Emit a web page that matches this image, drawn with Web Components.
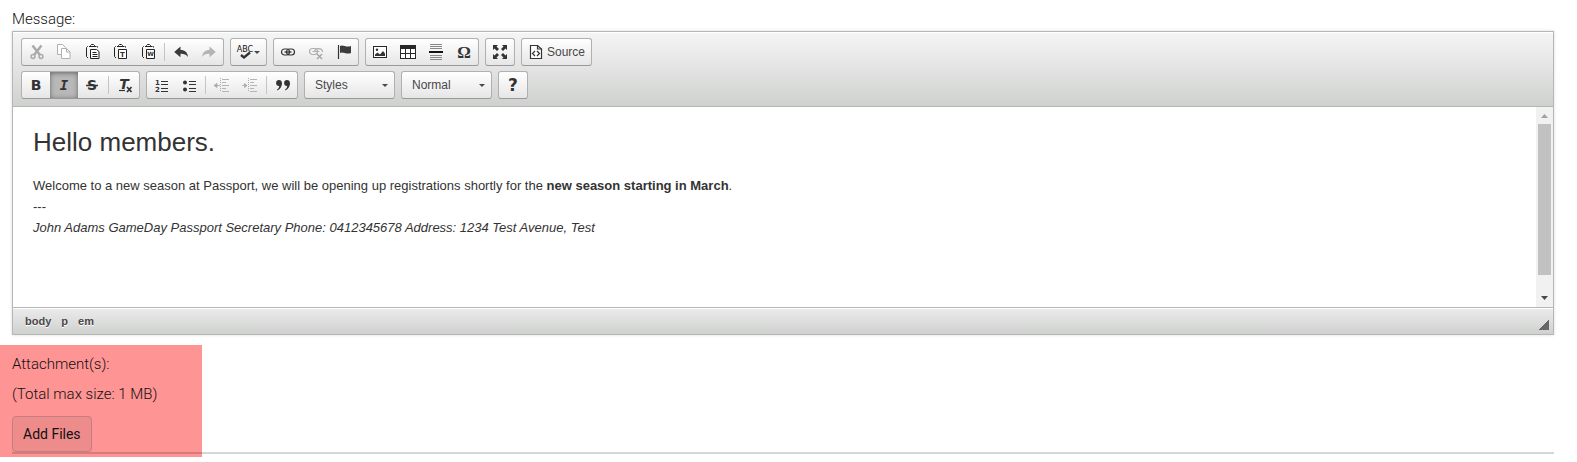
<!DOCTYPE html>
<html lang="en">
<head>
<meta charset="utf-8">
<title>Message</title>
<style>
  body { margin: 0; background: #fff; color: #111; font-family: Roboto, "Liberation Sans", sans-serif; font-size: 15px; }
</style>
</head>
<body>
<message-form></message-form>

<script>
const CLIPBOARD = `<g fill="none" stroke="#222"><path d="M4 2.500h-.5l-1 1v9l1.500 1.500M12.500 2.500h1v1"/><path d="M5 2.500h7M6.500 2V1.500L7.500.5h2l1 1V2"/></g>`;
const ICONS = {
  cut: `<g fill="none" stroke="#a9a9a9"><path d="M4.500 1.500 12 11M13.500 1.500 6 11" stroke-width="2.400"/><circle cx="5" cy="12.500" r="1.900" stroke-width="1.500"/><circle cx="13" cy="12.500" r="1.900" stroke-width="1.500"/></g>`,
  copy: `<g fill="#fff" stroke="#b0b0b0"><path d="M1.500.5h5l3 3v7h-8z"/><path d="M5.500 4.500h5l3.500 3.500v6.500H5.500z"/><path d="M10.500 4.500V8H14" fill="none"/></g>`,
  paste: `${CLIPBOARD}<g fill="none" stroke="#222"><path d="M6.500 5.500h6l2.500 2v7H6.500z" fill="#fff"/><path d="M8.500 8.500h4M8.500 10.500h5M8.500 12.500h5"/></g>`,
  pasteText: `${CLIPBOARD}<path d="M6.500 5.500h8v9h-8z" fill="#fff" stroke="#222"/><text x="10.500" y="13" font-size="7" font-weight="700" text-anchor="middle">T</text>`,
  pasteWord: `${CLIPBOARD}<path d="M6.500 5.500h8v9h-8z" fill="#fff" stroke="#222"/><text x="10.500" y="12" font-size="6" font-weight="700" text-anchor="middle">W</text>`,
  undo: `<path d="M1.200 8 7.500 2.500V6c4.500 0 7 2.500 7.500 7-1.800-2.500-4-3.300-7.500-3.200v3.500z" fill="#3a3a3a"/>`,
  redo: `<path d="M14.800 8 8.500 2.500V6C4 6 1.500 8.500 1 13c1.800-2.500 4-3.300 7.500-3.200v3.500z" fill="#b4b4b4"/>`,
  spell: `<text x="8" y="8" font-size="8" text-anchor="middle" fill="#111">ABC</text><path d="M4 11 7 13.500 13 8.500" fill="none" stroke="#333" stroke-width="2.400"/>`,
  link: `<g fill="none" stroke="#333" stroke-width="1.200"><rect x="1.500" y="5" width="8" height="6" rx="3"/><rect x="6.500" y="5" width="8" height="6" rx="3"/></g><path d="M4.500 8h7" stroke="#333" stroke-width="1.300"/>`,
  unlink: `<g fill="none" stroke="#b0b0b0" stroke-width="1.200"><rect x="1.500" y="4.500" width="8" height="6" rx="3"/><path d="M6.500 7.500c0-4 8-4 8 .5M4.500 7.500h7"/></g><path d="m9 10 5 5m0-5-5 5" stroke="#aaa" stroke-width="1.600"/>`,
  anchor: `<path d="M2.500 1v14" stroke="#333" stroke-width="1.200"/><path d="M4 2c3-2 6 2 11 0v7c-5 2-8-2-11 0z" fill="#3c3c3c"/>`,
  image: `<rect x="1" y="2" width="14" height="12" fill="#282828"/><path d="M2 3h12v10H2z" fill="#fff"/><circle cx="5" cy="5.700" r="1.200" fill="#333"/><path d="M3 12V10.500l2.500-2 2.500 2 3-3.500 2 2.500V12z" fill="#333"/>`,
  table: `<path d="M0 1h16v14H0z" fill="#282828"/><path d="M1 5h4v4H1zm5 0h4v4H6zm5 0h4v4h-4zM1 10h4v4H1zm5 0h4v4H6zm5 0h4v4h-4z" fill="#fff"/>`,
  rule: `<path d="M2 .5h12M2 2.500h12M2 4.500h12M2 11.500h12M2 13.500h12M2 15.500h12" stroke="#888"/><path d="M1 8h14" stroke="#111" stroke-width="2"/>`,
  omega: `<text x="8" y="14" font-size="17" font-weight="700" text-anchor="middle" font-family="Liberation Serif">Ω</text>`,
  maximize: `<g fill="#333"><path d="M1 1h5L4.500 2.500 7 5 5 7 2.500 4.500 1 6zM15 1v5l-1.500-1.500L11 7 9 5l2.500-2.500L10 1zM1 15v-5l1.500 1.500L5 9l2 2-2.500 2.500L6 15zM15 15h-5l1.500-1.500L9 11l2-2 2.500 2.500L15 10z"/></g>`,
  source: `<g fill="none" stroke="#333" stroke-width="1.200"><path d="M2.500 1.500h7l4 3.500v9.500h-11z" fill="#fff"/><path d="M9.500 1.500V5h4"/><path d="M7 7 4.500 9.500 7 12M9 7l2.500 2.500L9 12"/></g>`,
  bold: `<text x="8" y="13" font-size="14" font-weight="700" text-anchor="middle">B</text>`,
  italic: `<text x="8" y="13" font-size="14" font-weight="700" font-style="italic" text-anchor="middle" font-family="DejaVu Sans Mono">I</text>`,
  strike: `<text x="8" y="13" font-size="14" font-weight="700" text-anchor="middle">S</text><path d="M2 8.500h12" stroke="#333" stroke-width="1.500"/>`,
  clear: `<text x="7" y="12" font-size="14" font-weight="700" font-style="italic" text-anchor="middle">T</text><path d="M2 13.500h6" stroke="#333" stroke-width="1.200"/><path d="m10 10 4.500 5m0-5L10 15" stroke="#333" stroke-width="1.700"/>`,
  numbered: `<path d="M8 4.500h7M8 7.500h7M8 11.500h7M8 14.500h7" stroke="#333"/><text x="4.500" y="8" font-size="7" font-weight="700" text-anchor="middle">1</text><text x="4.500" y="15" font-size="7" font-weight="700" text-anchor="middle">2</text>`,
  bulleted: `<circle cx="4" cy="5.500" r="2" fill="#333"/><circle cx="4" cy="12.500" r="2" fill="#333"/><path d="M8 4.500h7M8 7.500h7M8 11.500h7M8 14.500h7" stroke="#333"/>`,
  outdent: `<path d="M6.500 1v14" stroke="#aaa" stroke-dasharray="1 1"/><path d="M8 2.500h7M8 5.500h4M8 8.500h7M8 11.500h4M8 14.500h7" stroke="#b4b4b4"/><path d="M0 8.500l3-2v4zM3 8.500h3" fill="#aaa" stroke="#aaa" stroke-width=".8"/>`,
  indent: `<path d="M6.500 1v14" stroke="#aaa" stroke-dasharray="1 1"/><path d="M8 2.500h7M8 5.500h4M8 8.500h7M8 11.500h4M8 14.500h7" stroke="#b4b4b4"/><path d="M5 8.500 2.500 6.500v4zM0 8.500h3" fill="#aaa" stroke="#aaa" stroke-width=".8"/>`,
  quote: `<g fill="#333"><circle cx="4" cy="6" r="2.900"/><path d="M6.900 5.500C7 9 5.800 12 2.500 13.500L2 12.500C3.800 11.500 4.300 10 4.200 8z"/><circle cx="12" cy="6" r="2.900"/><path d="M14.900 5.500c.1 3.500-1.100 6.500-4.400 8l-.5-1c1.800-1 2.300-2.500 2.200-4.500z"/></g>`,
  help: `<text x="8" y="14" font-size="17" font-weight="700" text-anchor="middle">?</text>`
};

function define(name, html, ready) {
  const template = document.createElement("template");
  template.innerHTML = html;
  customElements.define(name, class extends HTMLElement {
    connectedCallback() {
      if (this.shadowRoot) return;
      this.attachShadow({ mode: "open" }).append(template.content.cloneNode(true));
      if (ready) ready(this, this.shadowRoot);
    }
  });
}

define("tool-group", `
  <style>
    :host { display: flex; align-items: center; height: 26px; border: 1px solid #b0b0b0; border-bottom-color: #999; border-radius: 3px; background: linear-gradient(#fff, #e6e6e6); }
  </style><slot></slot>`);

define("tool-separator", `
  <style>:host { display: block; width: 1px; height: 18px; margin: 0 2px; background: #c4c4c4; }</style>`);

define("tool-button", `
  <style>
    :host { display: block; height: 26px; }
    button { display: flex; align-items: center; gap: 3px; height: 26px; padding: 0 6px; margin: 0; border: 0; background: none; color: #484848; font: 12px "Liberation Sans", sans-serif; }
    :host([pressed]) button { background: #b8b8b8; box-shadow: inset 0 1px 5px rgba(0,0,0,.45); }
    svg { display: block; width: 16px; height: 16px; flex: none; overflow: visible; font-family: "DejaVu Sans", sans-serif; fill: #333; }
    i { display: none; border: solid transparent; border-width: 3px 3px 0; border-top-color: #484848; }
    :host([menu]) button { gap: 1px; }
    :host([menu]) i { display: block; }
  </style>
  <button type="button"><svg viewBox="0 0 16 16" aria-hidden="true"></svg><slot></slot><i></i></button>`,
  (host, root) => {
    const button = root.querySelector("button");
    root.querySelector("svg").innerHTML = ICONS[host.getAttribute("icon")];
    button.setAttribute("aria-label", host.getAttribute("label"));
    if (host.hasAttribute("pressed")) button.setAttribute("aria-pressed", "true");
    button.disabled = host.hasAttribute("disabled");
  });

define("tool-combo", `
  <style>
    :host { display: grid; align-items: center; }
    select { grid-area: 1 / 1; appearance: none; width: 89px; height: 26px; padding: 0 10px; margin: 0; border: 0; background: none; color: #484848; font: 12px "Liberation Sans", sans-serif; }
    i { grid-area: 1 / 1; justify-self: end; margin-right: 6px; border: solid transparent; border-width: 3px 3px 0; border-top-color: #484848; pointer-events: none; }
  </style>
  <select><option></option></select><i></i>`,
  (host, root) => {
    root.querySelector("option").textContent = host.getAttribute("value");
    root.querySelector("select").setAttribute("aria-label", host.getAttribute("label"));
  });

define("scroll-strip", `
  <style>
    :host { display: flex; flex-direction: column; align-items: center; width: 17px; background: #f1f1f1; }
    svg { width: 17px; height: 17px; flex: none; }
    .track { flex: 1; display: flex; width: 13px; }
    .thumb { width: 13px; height: 91%; background: #c1c1c1; }
  </style>
  <svg viewBox="0 0 17 17"><path d="M5 11h7L8.500 7z" fill="#a0a0a0"/></svg>
  <div class="track"><div class="thumb"></div></div>
  <svg viewBox="0 0 17 17"><path d="M5 6h7L8.500 10z" fill="#484848"/></svg>`);

define("rich-editor", `
  <style>
    :host { display: block; border: 1px solid #b6b6b6; box-shadow: 0 0 3px rgba(0,0,0,.15); font-family: "Liberation Sans", sans-serif; }
    .tools { display: flex; flex-direction: column; gap: 5px; padding: 6px 8px 7px; border-bottom: 1px solid #b6b6b6; background: linear-gradient(#f5f5f5, #cfd1cf); box-shadow: inset 0 1px 0 #fff; }
    .row { display: flex; flex-wrap: wrap; gap: 6px; }
    .view { display: flex; min-height: 200px; background: #fff; }
    .page { flex: 1; padding: 20px; outline: 0; color: #333; font-size: 13px; line-height: 21px; }
    .foot { display: flex; align-items: center; justify-content: space-between; height: 26px; padding: 0 4px 0 12px; border-top: 1px solid #b6b6b6; background: linear-gradient(#ebebeb, #cfd1cf); box-shadow: inset 0 1px 0 #fff; }
    nav { display: flex; gap: 10px; }
    nav a { color: #484848; font-size: 11px; font-weight: 700; line-height: 16px; text-decoration: none; text-shadow: 0 1px 0 #fff; }
    .grip { align-self: end; width: 10px; height: 10px; margin-bottom: 4px; background: linear-gradient(135deg, transparent 50%, #666 50%); }
  </style>
  <div class="tools" role="toolbar" aria-label="Editor">
    <div class="row">
      <tool-group>
        <tool-button icon="cut" label="Cut" disabled></tool-button><tool-button icon="copy" label="Copy" disabled></tool-button><tool-button icon="paste" label="Paste"></tool-button><tool-button icon="pasteText" label="Paste as plain text"></tool-button><tool-button icon="pasteWord" label="Paste from Word"></tool-button><tool-separator></tool-separator><tool-button icon="undo" label="Undo"></tool-button><tool-button icon="redo" label="Redo" disabled></tool-button>
      </tool-group>
      <tool-group><tool-button icon="spell" label="Spell check" menu></tool-button></tool-group>
      <tool-group><tool-button icon="link" label="Link"></tool-button><tool-button icon="unlink" label="Unlink" disabled></tool-button><tool-button icon="anchor" label="Anchor"></tool-button></tool-group>
      <tool-group><tool-button icon="image" label="Image"></tool-button><tool-button icon="table" label="Table"></tool-button><tool-button icon="rule" label="Horizontal line"></tool-button><tool-button icon="omega" label="Special character"></tool-button></tool-group>
      <tool-group><tool-button icon="maximize" label="Maximize"></tool-button></tool-group>
      <tool-group><tool-button icon="source" label="Source">Source</tool-button></tool-group>
    </div>
    <div class="row">
      <tool-group><tool-button icon="bold" label="Bold"></tool-button><tool-button icon="italic" label="Italic" pressed></tool-button><tool-button icon="strike" label="Strikethrough"></tool-button><tool-separator></tool-separator><tool-button icon="clear" label="Remove format"></tool-button></tool-group>
      <tool-group><tool-button icon="numbered" label="Numbered list"></tool-button><tool-button icon="bulleted" label="Bulleted list"></tool-button><tool-separator></tool-separator><tool-button icon="outdent" label="Decrease indent" disabled></tool-button><tool-button icon="indent" label="Increase indent" disabled></tool-button><tool-separator></tool-separator><tool-button icon="quote" label="Block quote"></tool-button></tool-group>
      <tool-group><tool-combo label="Formatting styles" value="Styles"></tool-combo></tool-group>
      <tool-group><tool-combo label="Paragraph format" value="Normal"></tool-combo></tool-group>
      <tool-group><tool-button icon="help" label="Help"></tool-button></tool-group>
    </div>
  </div>
  <div class="view">
    <div class="page" contenteditable="true" role="textbox" aria-multiline="true" aria-label="Message" spellcheck="false"><slot></slot></div>
    <scroll-strip></scroll-strip>
  </div>
  <div class="foot">
    <nav aria-label="Element path"><a href="#body">body</a><a href="#p">p</a><a href="#em">em</a></nav>
    <div class="grip"></div>
  </div>`);

define("attachment-panel", `
  <style>
    :host { display: block; padding: 4px 23px 3px 12px; background: linear-gradient(#ff9494, #ff9494) no-repeat 0 0 / 202px 100%; }
    .label { margin: 0; font-weight: 300; line-height: 30px; }
    button { display: block; height: 36px; margin: 7px 0 0; padding: 0 10px; border: 1px solid #c47c80; border-radius: 4px; background: #ee8b8b; color: #111; font: 14px Roboto, "Liberation Sans", sans-serif; }
    hr { height: 2px; margin: 0; border: 0; background: rgba(0,0,0,.16); }
  </style>
  <p class="label">Attachment(s):</p>
  <p class="label">(Total max size: 1 MB)</p>
  <button type="button">Add Files</button>
  <hr>`);

define("message-form", `
  <style>
    :host { display: block; padding-top: 7px; }
    .label { margin: 0 12px; font-weight: 300; line-height: 24px; }
    rich-editor { margin: 0 23px 10px 12px; }
    h1 { margin: 0 0 17px; font-size: 26px; font-weight: 400; line-height: 31px; }
    p { margin: 0; }
  </style>
  <div class="label">Message:</div>
  <rich-editor>
    <h1>Hello members.</h1>
    <p>Welcome to a new season at Passport, we will be opening up registrations shortly for the <strong>new season starting in March</strong>.<br>---<br><em>John Adams GameDay Passport Secretary Phone: 0412345678 Address: 1234 Test Avenue, Test</em></p>
  </rich-editor>
  <attachment-panel></attachment-panel>`);
</script>
</body>
</html>
